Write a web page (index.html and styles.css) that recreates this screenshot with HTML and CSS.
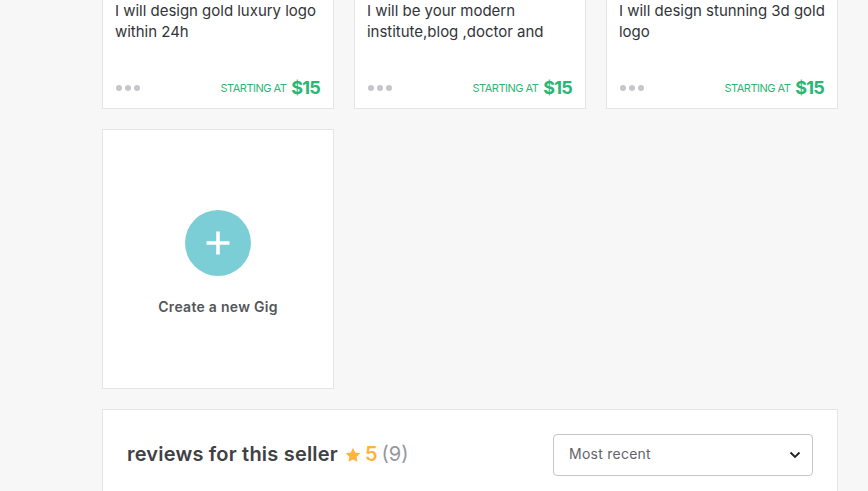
FILE: index.html
```html
<!DOCTYPE html>
<html lang="en">
<head>
<meta charset="utf-8">
<title>Seller gigs</title>
<link rel="stylesheet" href="styles.css">
</head>
<body>
<main class="page">
  <section class="gigs">
    <article class="card gig">
      <p class="title">I will design gold luxury logo within 24h</p>
      <div class="foot">
        <span class="dots"><i></i><i></i><i></i></span>
        <span class="price"><small>STARTING AT</small><b>$15</b></span>
      </div>
    </article>
    <article class="card gig">
      <p class="title">I will be your modern institute,blog ,doctor and</p>
      <div class="foot">
        <span class="dots"><i></i><i></i><i></i></span>
        <span class="price"><small>STARTING AT</small><b>$15</b></span>
      </div>
    </article>
    <article class="card gig">
      <p class="title">I will design stunning 3d gold logo</p>
      <div class="foot">
        <span class="dots"><i></i><i></i><i></i></span>
        <span class="price"><small>STARTING AT</small><b>$15</b></span>
      </div>
    </article>
    <article class="card create">
      <span class="plus">
        <svg width="24" height="24" viewBox="0 0 24 24"><path d="M12 0.5v23M0.5 12h23" stroke="#fff" stroke-width="3.600" fill="none"/></svg>
      </span>
      <span class="create-label">Create a new Gig</span>
    </article>
  </section>
  <section class="card reviews">
    <h2>reviews for this seller</h2>
    <svg class="star" width="16" height="16" viewBox="0 0 16 16"><path d="M8 .8l2.2 4.7 5.1.7-3.7 3.5.9 5.1L8 12.4l-4.5 2.4.9-5.1L.7 6.2l5.1-.7z" fill="#ffb33e"/></svg>
    <span class="score">5</span>
    <span class="count">(9)</span>
    <div class="select">
      <span>Most recent</span>
      <svg width="12" height="8" viewBox="0 0 12 8"><path d="M1.5 1.500L6 6l4.500-4.500" stroke="#222" stroke-width="1.800" fill="none"/></svg>
    </div>
  </section>
</main>
</body>
</html>
```
FILE: styles.css
```css
html, body {
  margin: 0;
  height: 100%;
  overflow: hidden;
  background: #f7f7f7;
}
.page {
  width: 736px;
  margin-left: 102px;
  font-family: "Inter", "Liberation Sans", sans-serif;
}
.gigs {
  display: grid;
  grid-template-columns: repeat(3, 232px);
  grid-template-rows: 109px 260px;
  column-gap: 20px;
  row-gap: 20px;
}
.card {
  background: #fff;
  border: 1px solid #e4e5e7;
  box-sizing: border-box;
}
.gig {
  border-top: 0;
  padding: 0 12px 10px;
  display: flex;
  flex-direction: column;
  justify-content: space-between;
}
.title {
  margin: 0 -4px 0 0;
  font-size: 15px;
  line-height: 21px;
  letter-spacing: -0.02px;
  color: #333438;
}
.foot {
  display: flex;
  align-items: center;
  justify-content: space-between;
}
.dots {
  display: flex;
  gap: 3px;
  margin-left: 1px;
}
.dots i {
  width: 6px;
  height: 6px;
  border-radius: 50%;
  background: #c5c6c9;
}
.price {
  display: flex;
  align-items: center;
  gap: 5px;
  padding-right: 1px;
  color: #2bb673;
}
.price small {
  font-size: 11px;
  letter-spacing: -0.5px;
}
.price b {
  font-size: 18px;
  font-weight: 700;
  letter-spacing: -0.8px;
}
.create {
  display: flex;
  flex-direction: column;
  align-items: center;
  padding-top: 80px;
}
.plus {
  width: 66px;
  height: 66px;
  border-radius: 50%;
  background: #7bced5;
  display: flex;
  align-items: center;
  justify-content: center;
}
.create-label {
  margin-top: 21px;
  font-size: 14px;
  line-height: 20px;
  font-weight: 600;
  letter-spacing: 0.28px;
  color: #55565b;
}
.reviews {
  margin-top: 20px;
  height: 120px;
  padding: 24px 24px 0;
  display: flex;
  align-items: flex-start;
}
.reviews h2 {
  margin: -1px 0 0;
  font-size: 20px;
  line-height: 42px;
  font-weight: 600;
  letter-spacing: 0.2px;
  color: #404145;
}
.star {
  margin: 13px 4px 0 7px;
}
.score {
  margin-top: -1px;
  font-size: 20px;
  line-height: 42px;
  font-weight: 600;
  color: #ffb33e;
}
.count {
  margin: -1px 0 0 4px;
  font-size: 20px;
  line-height: 42px;
  color: #95979d;
}
.select {
  margin-left: auto;
  width: 260px;
  height: 42px;
  box-sizing: border-box;
  border: 1px solid #c5c6c9;
  border-radius: 4px;
  padding: 0 11px 3px 15px;
  display: flex;
  align-items: center;
  justify-content: space-between;
  font-size: 14px;
  letter-spacing: 0.25px;
  color: #62646a;
}
.select svg {
  margin-top: 3px;
}
```
